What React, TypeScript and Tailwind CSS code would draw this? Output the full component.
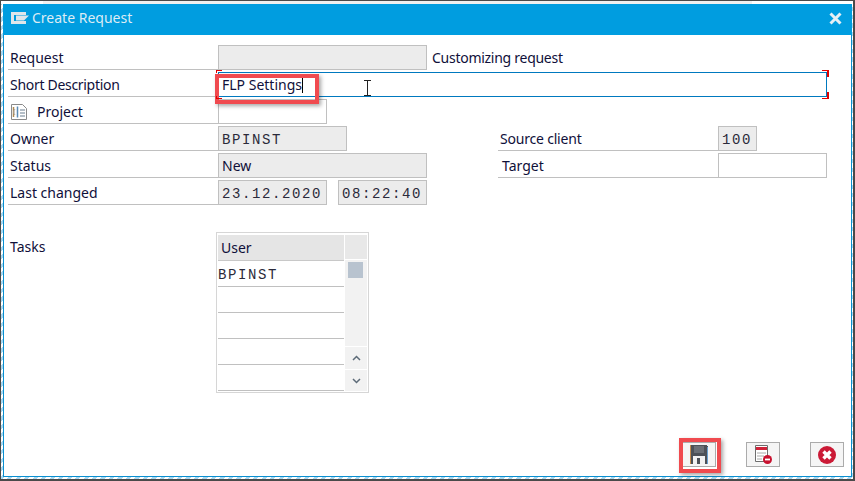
const sans = "font-['Noto_Sans',sans-serif]";
const mono = "font-['Liberation_Mono',monospace] tracking-[1.6px] text-[14px] text-[#2a2a3a] pt-[3px]";

function Row({ children }: { children: React.ReactNode }) {
  return <div className="flex h-[27px] items-end">{children}</div>;
}

function Label({ children, w = "w-[210px]", pl = "pl-[2px]", className = "" }: { children: React.ReactNode; w?: string; pl?: string; className?: string }) {
  return (
    <div className={`${w} ${pl} h-[27px] pt-[4px] shrink-0 border-b border-[#c0c0c0] flex items-center gap-[8px] leading-none ${className}`}>
      {children}
    </div>
  );
}

function Field({ w, gray = true, children, className = "" }: { w: string; gray?: boolean; children?: React.ReactNode; className?: string }) {
  return (
    <div className={`${w} h-[25px] shrink-0 border border-[#c0c0c0] ${gray ? "bg-[#ececec]" : "bg-white"} flex items-center pl-[3px] ${className}`}>
      {children}
    </div>
  );
}

function ProjectIcon() {
  return (
    <svg width="19" height="18" viewBox="0 0 19 18">
      <path d="M1.500 1.500h11l4 4v11h-15z" fill="#fff" stroke="#8a8a8a" />
      <path d="M3.500 4v10" stroke="#b08a50" strokeWidth="1.500" />
      <path d="M7.500 3.500v11" stroke="#5b8bb5" strokeWidth="1.500" />
      <path d="M5 6c-1.500 1-1.500 5 0 6" fill="none" stroke="#a9a9a9" />
      <path d="M10 7h5M10 10h5M10 13h5" stroke="#6b7f90" />
    </svg>
  );
}

function SaveIcon() {
  return (
    <svg width="18" height="19" viewBox="0 0 18 19" shapeRendering="crispEdges">
      <path d="M0 0h16l2 2v17H0z" fill="#4d5157" />
      <path d="M0 0h1v19H0z" fill="#c58a4a" />
      <path d="M17 2h1v17h-1z" fill="#6aa0d0" />
      <path d="M4 1h10v7H4z" fill="#6b6f75" />
      <path d="M3 11h12v8H3z" fill="#f1f1f1" />
      <path d="M7 13h3v6H7z" fill="#4d5157" />
    </svg>
  );
}

function DeleteRowIcon() {
  return (
    <svg width="17" height="19" viewBox="0 0 17 19">
      <path d="M0.500 0.500h12v16h-12z" fill="#fff" stroke="#6e6e6e" />
      <path d="M1 2h11v3H1z" fill="#d0233a" />
      <path d="M2 8h9M2 11h7M2 14h5" stroke="#a8a8a8" />
      <circle cx="12.500" cy="14.500" r="4.500" fill="#c8102e" />
      <path d="M10 14.500h5" stroke="#fff" strokeWidth="1.800" />
    </svg>
  );
}

function CancelIcon() {
  return (
    <svg width="18" height="18" viewBox="0 0 18 18">
      <circle cx="9" cy="9" r="9" fill="#cb1a36" />
      <path d="M5.500 5.500l7 7M12.500 5.500l-7 7" stroke="#fff" strokeWidth="3.400" />
    </svg>
  );
}

function ToolButton({ children }: { children: React.ReactNode }) {
  return (
    <div className="w-[34px] h-[25px] border border-[#ababab] bg-[#f5f5f5] flex items-center justify-center">
      {children}
    </div>
  );
}

export default function App() {
  return (
    <div className={`${sans} text-[14px] text-[#10103a] relative w-[855px] h-[481px] overflow-hidden flex flex-col border-t border-l border-r-2 border-b-2 border-[#4a4a4a] bg-[repeating-linear-gradient(135deg,#a9d8f0_0px,#a9d8f0_3px,#ffffff_3px,#ffffff_6px)]`}>
      <div className="h-[3px] shrink-0 bg-white flex pl-[42px]">
        <div className="w-[709px] h-[3px] bg-[#f0f0f0]" />
      </div>
      <div className="ml-[2px] mr-px h-[473px] shrink-0 flex flex-col border-x border-b border-[#0a8fd0] bg-white">
        <div className="h-[31px] shrink-0 bg-[#009de0] flex items-center pl-[8px] pr-[10px] pb-[5px] text-[#dcecf5] -mx-px">
          <svg width="18" height="12" viewBox="0 0 18 12" className="mr-[3px] mt-[1px]">
            <path d="M0 0h15v3H3v6h12v3H0z" fill="#dfe6ea" />
            <path d="M5 3.500h13l-5 5H5z" fill="#dfe6ea" />
          </svg>
          <span className="text-[14px]">Create Request</span>
          <svg width="13" height="13" viewBox="0 0 13 13" className="ml-auto mt-[3px]">
            <path d="M1.500 1.500l10 10M11.500 1.500l-10 10" stroke="#e6eff5" strokeWidth="3" />
          </svg>
        </div>
        <div className="flex-1 flex flex-col pl-[4px] pt-[8px] pr-[24px]">
          <Row>
            <Label>Request</Label>
            <Field w="w-[209px]" />
            <span className="ml-[5px] h-[25px] leading-[25px] tracking-[-0.27px]">Customizing request</span>
          </Row>
          <Row>
            <Label className="tracking-[-0.3px]">Short Description</Label>
            <div className="w-[609px] h-[25px] border border-[#0079bf] bg-white flex items-center pl-[3px]">
              FLP Settings
              <span className="w-px h-[16px] bg-black" />
            </div>
          </Row>
          <Row>
            <Label><ProjectIcon />Project</Label>
            <Field w="w-[109px]" gray={false} />
          </Row>
          <Row>
            <Label>Owner</Label>
            <Field w="w-[129px]"><span className={mono}>BPINST</span></Field>
            <div className="w-[151px]" />
            <Label w="w-[220px]" className="tracking-[-0.2px]">Source client</Label>
            <Field w="w-[39px]"><span className={mono}>100</span></Field>
          </Row>
          <Row>
            <Label>Status</Label>
            <Field w="w-[209px]">New</Field>
            <div className="w-[71px]" />
            <Label w="w-[220px]" pl="pl-[4px]">Target</Label>
            <Field w="w-[109px]" gray={false} />
          </Row>
          <Row>
            <Label>Last changed</Label>
            <Field w="w-[109px]"><span className={mono}>23.12.2020</span></Field>
            <Field w="w-[89px]" className="ml-[11px]"><span className={mono}>08:22:40</span></Field>
          </Row>
          <div className="flex mt-[27px]">
            <div className="w-[208px] pl-[2px] pt-[3px] leading-[24px]">Tasks</div>
            <div className="w-[153px] h-[161px] border border-[#d6d6d6] pt-[2px] px-px flex">
              <div className="w-[126px]">
                <div className="h-[26px] bg-[#e5e5e5] border-b border-[#c8c8c8] flex items-center pl-[3px] leading-none">User</div>
                <div className="h-[26px] border-b border-[#c0c0c0] flex items-center"><span className={mono}>BPINST</span></div>
                <div className="h-[26px] border-b border-[#c0c0c0]" />
                <div className="h-[26px] border-b border-[#c0c0c0]" />
                <div className="h-[26px] border-b border-[#c0c0c0]" />
                <div className="h-[26px] border-b border-[#c0c0c0]" />
              </div>
              <div className="w-[22px] h-[156px] ml-px flex flex-col bg-[#f2f2f2]">
                <div className="h-[25px] shrink-0 bg-[#e8e8e8] border-b border-white" />
                <div className="flex-1 pt-[2px] pl-[3px]">
                  <div className="w-[15px] h-[16px] bg-[#b8c3cf]" />
                </div>
                <div className="h-[23px] shrink-0 border-t border-white flex items-center justify-center">
                  <svg width="9" height="6" viewBox="0 0 9 6"><path d="M1 5l3.500-3.500L8 5" fill="none" stroke="#5d6b78" strokeWidth="1.500" /></svg>
                </div>
                <div className="h-[22px] shrink-0 border-t border-white flex items-center justify-center">
                  <svg width="9" height="6" viewBox="0 0 9 6"><path d="M1 1l3.500 3.500L8 1" fill="none" stroke="#5d6b78" strokeWidth="1.500" /></svg>
                </div>
              </div>
            </div>
          </div>
          <div className="flex-1 flex justify-end items-end gap-[30px] -mr-[17px] pb-[9px]">
            <ToolButton><SaveIcon /></ToolButton>
            <ToolButton><DeleteRowIcon /></ToolButton>
            <ToolButton><CancelIcon /></ToolButton>
          </div>
        </div>
      </div>

      {/* annotation overlays (offsets are relative to the 1px root border) */}
      <div className="absolute left-[214px] top-[73px] w-[104px] h-[30px] border-[4px] border-[#f04a4f] shadow-[2px_2px_4px_rgba(0,0,0,0.35)]" />
      <div className="absolute left-[678px] top-[437px] w-[42px] h-[35px] border-[4px] border-[#f04a4f] shadow-[2px_2px_4px_rgba(0,0,0,0.35)]" />
      {/* required-field corner ticks */}
      <div className="absolute left-[215px] top-[69px] w-[6px] h-[3px] border-t border-l border-[#e00000]" />
      <div className="absolute left-[215px] top-[95px] w-[6px] h-[3px] border-b border-l border-[#e00000]" />
      <div className="absolute left-[821px] top-[69px] w-[7px] h-[7px] border-t border-r-2 border-[#e00000]" />
      <div className="absolute left-[821px] top-[91px] w-[7px] h-[7px] border-b border-r-2 border-[#e00000]" />
      {/* mouse cursor */}
      <svg className="absolute left-[362px] top-[79px]" width="9" height="16" viewBox="0 0 9 16">
        <path d="M1 .5h7M1 15.500h7M4.500 1v14" stroke="#222" fill="none" />
      </svg>
    </div>
  );
}
